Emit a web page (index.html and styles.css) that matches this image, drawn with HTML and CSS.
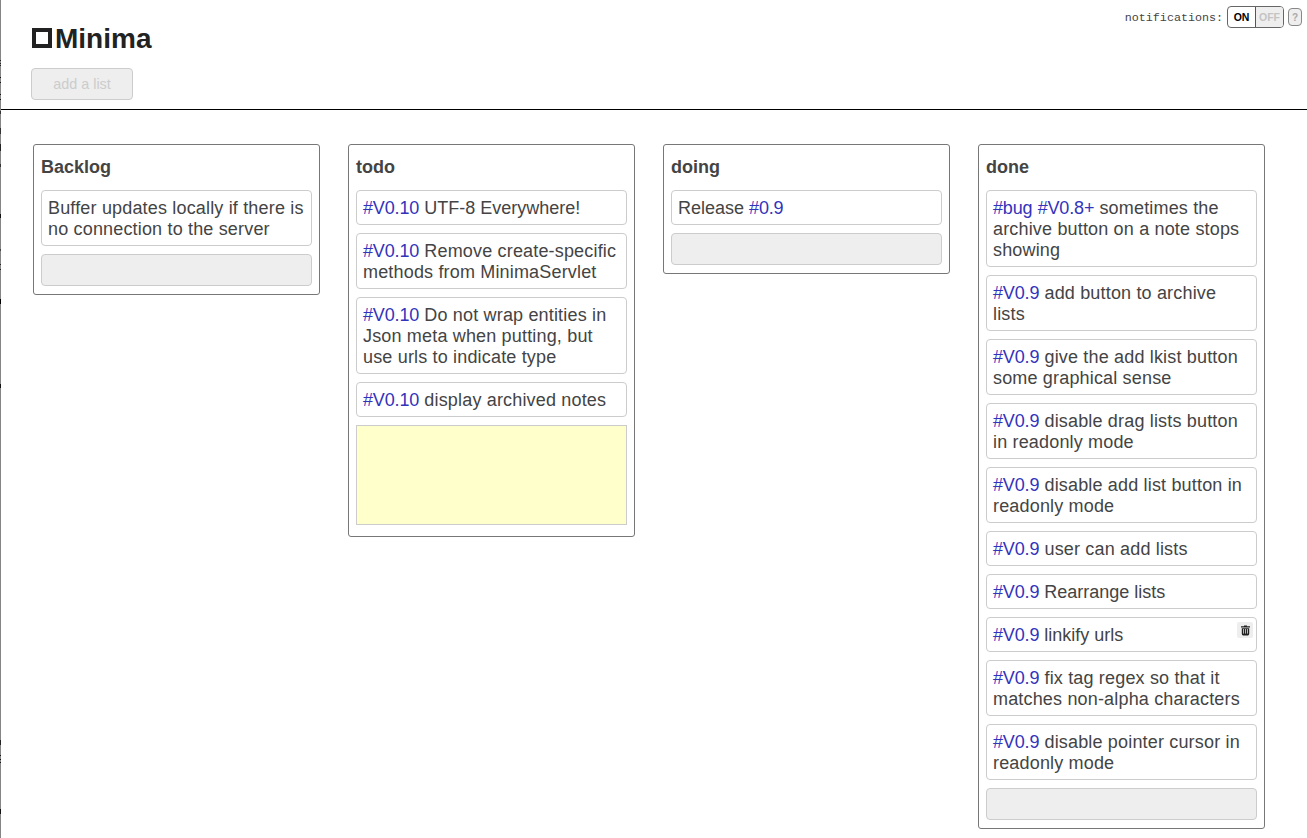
FILE: index.html
```
<!DOCTYPE html>
<html lang="en">
<head>
<meta charset="utf-8">
<title>Minima</title>
<link rel="stylesheet" href="styles.css">
</head>
<body>
<div class="edge"></div>
<div class="page">
  <header class="header">
    <div class="brand">
      <h1 class="logo"><span class="logo-box"></span><span class="logo-name">Minima</span></h1>
      <button class="add-list">add a list</button>
    </div>
    <div class="tools">
      <span class="tools-label">notifications:</span>
      <div class="switch"><span class="on">ON</span><span class="off">OFF</span></div>
      <span class="help">?</span>
    </div>
  </header>
  <main class="board">
    <section class="list">
      <h2 class="list-title">Backlog</h2>
      <div class="note">Buffer updates locally if there is no connection to the server</div>
      <div class="new-note"></div>
    </section>
    <section class="list list-dropping">
      <h2 class="list-title">todo</h2>
      <div class="note compact"><span class="tag">#V0.10</span> UTF-8 Everywhere!</div>
      <div class="note"><span class="tag">#V0.10</span> Remove create-specific methods from MinimaServlet</div>
      <div class="note"><span class="tag">#V0.10</span> Do not wrap entities in Json meta when putting, but use urls to indicate type</div>
      <div class="note"><span class="tag">#V0.10</span> display archived notes</div>
      <div class="editor"></div>
    </section>
    <section class="list">
      <h2 class="list-title">doing</h2>
      <div class="note compact">Release <span class="tag">#0.9</span></div>
      <div class="new-note"></div>
    </section>
    <section class="list">
      <h2 class="list-title">done</h2>
      <div class="note"><span class="tag">#bug</span> <span class="tag">#V0.8+</span> sometimes the archive button on a note stops showing</div>
      <div class="note"><span class="tag">#V0.9</span> add button to archive lists</div>
      <div class="note"><span class="tag">#V0.9</span> give the add lkist button some graphical sense</div>
      <div class="note"><span class="tag">#V0.9</span> disable drag lists button in readonly mode</div>
      <div class="note"><span class="tag">#V0.9</span> disable add list button in readonly mode</div>
      <div class="note"><span class="tag">#V0.9</span> user can add lists</div>
      <div class="note compact"><span class="tag">#V0.9</span> Rearrange lists</div>
      <div class="note compact"><span class="tag">#V0.9</span> linkify urls
        <span class="archive"><svg width="16" height="16" viewBox="0 0 16 16"><path d="M4 4.2h9v1.2H4zM7 3.5h3v1H7z" fill="#222"/><path d="M4.8 6.2h7.4v5.6q0 1.6-1.4 1.6H6.2q-1.4 0-1.4-1.6z" fill="#222"/><path d="M6.5 7v4.6M8.5 7v4.6M10.5 7v4.6" stroke="#ddd" stroke-width=".8"/></svg></span>
      </div>
      <div class="note"><span class="tag">#V0.9</span> fix tag regex so that it matches non-alpha characters</div>
      <div class="note"><span class="tag">#V0.9</span> disable pointer cursor in readonly mode</div>
      <div class="new-note"></div>
    </section>
  </main>
</div>
</body>
</html>
```
FILE: styles.css
```
* { box-sizing: border-box; }
body {
  margin: 0;
  display: flex;
  height: 838px;
  overflow: hidden;
  background: #fff;
  color: #444;
  font-family: "Liberation Sans", Arial, sans-serif;
}
/* sliver of the window behind, with its dark marks */
.edge {
  width: 1px;
  flex: none;
  background:
    linear-gradient(#222, #222) 0 60px / 1px 1px,
    linear-gradient(#222, #222) 0 63px / 1px 1px,
    linear-gradient(#222, #222) 0 65px / 1px 1px,
    linear-gradient(#111, #111) 0 77px / 1px 1px,
    linear-gradient(#111, #111) 0 82px / 1px 1px,
    linear-gradient(#111, #111) 0 94px / 1px 1px,
    linear-gradient(#111, #111) 0 99px / 1px 1px,
    linear-gradient(#333, #333) 0 111px / 1px 3px,
    linear-gradient(#333, #333) 0 128px / 1px 6px,
    linear-gradient(#222, #222) 0 144px / 1px 7px,
    linear-gradient(#333, #333) 0 164px / 1px 3px,
    linear-gradient(#111, #111) 0 214px / 1px 4px,
    linear-gradient(#444, #444) 0 249px / 1px 2px,
    linear-gradient(#222, #222) 0 264px / 1px 1px,
    linear-gradient(#222, #222) 0 269px / 1px 1px,
    linear-gradient(#000, #000) 0 299px / 1px 5px,
    linear-gradient(#111, #111) 0 384px / 1px 4px,
    linear-gradient(#222, #222) 0 740px / 1px 5px,
    linear-gradient(#111, #111) 0 755px / 1px 1px,
    linear-gradient(#111, #111) 0 759px / 1px 1px,
    linear-gradient(#111, #111) 0 762px / 1px 1px,
    linear-gradient(#111, #111) 0 809px / 1px 5px,
    #858585;
  background-repeat: no-repeat;
}
.page { flex: 1; min-width: 0; }
.header {
  display: flex;
  justify-content: space-between;
  align-items: flex-start;
  height: 110px;
  padding-left: 30px;
  border-bottom: 1px solid #000;
}
.logo {
  display: flex;
  align-items: center;
  gap: 3px;
  margin: 22px 0 14px;
  padding-left: 1px;
  height: 32px;
  font-size: 28px;
  line-height: 32px;
  color: #222;
}
.logo-name { padding-top: 2px; }
.logo-box { width: 20px; height: 20px; border: 4px solid #222; }
.add-list {
  display: block;
  width: 102px;
  height: 32px;
  padding: 0;
  border: 1px solid #ccc;
  border-radius: 4px;
  background: #eee;
  color: #ccc;
  font: 14.4px "Liberation Sans", Arial, sans-serif;
}
.tools { display: flex; align-items: center; padding: 6px 5px 0 0; }
.tools-label {
  margin-right: 4px;
  padding-top: 2px;
  font: 11.7px "Liberation Mono", "Courier New", monospace;
}
.switch {
  display: flex;
  width: 57px;
  height: 22px;
  margin-right: 4px;
  border: 1px solid #666;
  border-radius: 4px;
  overflow: hidden;
  font-size: 10.5px;
  font-weight: bold;
  line-height: 21px;
  text-align: center;
}
.on { width: 28px; border-right: 1px solid #555; color: #000; }
.off { flex: 1; background: #eee; color: #c4c4c4; }
.help {
  width: 14px;
  height: 18px;
  border: 1px solid #888;
  border-radius: 4px;
  background: #eee;
  color: #aaa;
  font-size: 10px;
  font-weight: bold;
  line-height: 17px;
  text-align: center;
}
.board {
  display: flex;
  align-items: flex-start;
  gap: 28px;
  padding: 34px 0 0 32px;
}
.list {
  display: flex;
  flex-direction: column;
  gap: 8px;
  flex: none;
  width: 287px;
  padding: 12px 7px 8px;
  border: 1px solid #777;
  border-radius: 3px;
}
.list-dropping { padding-bottom: 11px; }
.list-title { margin: 0 0 4px; font-size: 18px; line-height: 21px; }
.note {
  position: relative;
  padding: 7px 7px 5px 6px;
  border: 1px solid #ccc;
  border-radius: 4px;
  font-size: 18px;
  line-height: 21px;
  letter-spacing: 0.17px;
}
.compact { letter-spacing: 0; }
.tag { color: #33b; letter-spacing: -0.15px; }
.new-note { height: 32px; border: 1px solid #ccc; border-radius: 4px; background: #eee; }
.editor { height: 100px; border: 1px solid #ccc; background: #ffc; }
.archive {
  position: absolute;
  top: 4px;
  right: 3px;
  width: 16px;
  height: 16px;
  border-radius: 2px;
  background: #eee;
}
.archive svg { display: block; }
```
